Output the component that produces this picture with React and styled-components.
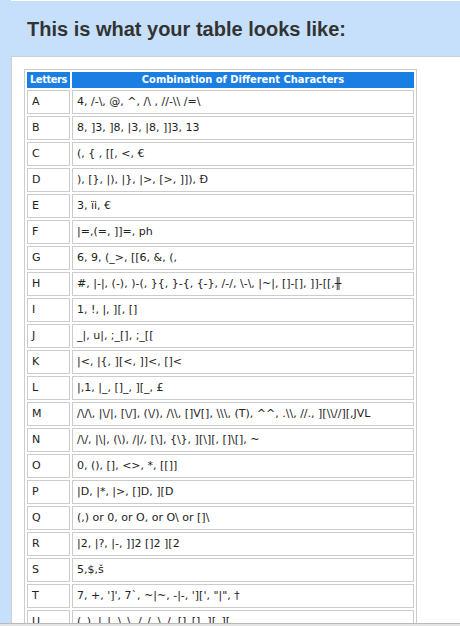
import React from "react";
import styled, { createGlobalStyle } from "styled-components";

const GlobalStyle = createGlobalStyle`
  html, body {
    margin: 0;
    padding: 0;
    background: #c6e0fb;
    overflow: hidden;
  }
`;

const Page = styled.div`
  width: 460px;
  height: 626px;
  background: #c6e0fb;
  overflow: hidden;
  position: relative;
`;

const TopStrip = styled.div`
  height: 1px;
  margin-left: 11px;
  background: #ffffff;
`;

const Heading = styled.h2`
  margin: 0;
  padding: 16px 0 0 27px;
  height: 55px;
  box-sizing: border-box;
  font-family: "Liberation Sans", Arial, sans-serif;
  font-size: 20px;
  line-height: 24px;
  font-weight: 700;
  color: #333333;
`;

const Panel = styled.div`
  margin-left: 11px;
  background: #ffffff;
  border-top: 1px solid #cfcfcf;
  border-left: 1px solid #cfcfcf;
  padding: 12px 0 0 12px;
  height: 600px;
`;

const Table = styled.table`
  border: 1px solid #cccccc;
  border-collapse: separate;
  border-spacing: 2px;
  width: 393px;
  table-layout: fixed;
  font-family: "DejaVu Sans", Verdana, sans-serif;
  font-size: 11px;
  color: #222222;
`;

const HeadCell = styled.th`
  background: #1b7ee2;
  color: #ffffff;
  font-family: "DejaVu Sans Condensed", "DejaVu Sans", sans-serif;
  font-weight: 700;
  text-align: center;
  height: 16px;
  padding: 0;
  line-height: 16px;
  white-space: nowrap;
  overflow: hidden;
  letter-spacing: ${props => (props.$narrow ? "-0.4px" : "0")};
  width: ${props => (props.$narrow ? "43px" : "auto")};
`;

const Cell = styled.td`
  border: 1px solid #cccccc;
  height: 22px;
  padding: 0 4px;
  line-height: 22px;
  white-space: nowrap;
  overflow: hidden;
`;

const BottomBar = styled.div`
  position: absolute;
  left: 0;
  right: 0;
  bottom: 0;
  height: 2px;
  border-top: 1px solid #b9b9b9;
  background: #e4e4e4;
`;

const rows = [
  ["A", "4, /-\\, @, ^, /\\ , //-\\\\ /=\\"],
  ["B", "8, ]3, ]8, |3, |8, ]]3, 13"],
  ["C", "(, { , [[, <, €"],
  ["D", "), [}, |), |}, |>, [>, ]]), Đ"],
  ["E", "3, ïi, €"],
  ["F", "|=,(=, ]]=, ph"],
  ["G", "6, 9, (_>, [[6, &, (,"],
  ["H", "#, |-|, (-), )-(, }{, }-{, {-}, /-/, \\-\\, |~|, []-[], ]]-[[,╫"],
  ["I", "1, !, |, ][, []"],
  ["J", "_|, u|, ;_[], ;_[["],
  ["K", "|<, |{, ][<, ]]<, []<"],
  ["L", "|,1, |_, []_, ][_, £"],
  ["M", "/\\/\\, |\\/|, [\\/], (\\/), /\\\\, []V[], \\\\\\, (T), ^^, .\\\\, //., ][\\\\//][,JVL"],
  ["N", "/\\/, |\\|, (\\), /|/, [\\], {\\}, ][\\][, []\\[], ~"],
  ["O", "0, (), [], <>, *, [[]]"],
  ["P", "|D, |*, |>, []D, ][D"],
  ["Q", "(,) or 0, or O, or O\\ or []\\"],
  ["R", "|2, |?, |-, ]]2 []2 ][2"],
  ["S", "5,$,š"],
  ["T", "7, +, ']', 7`, ~|~, -|-, '][', \"|\", †"],
  ["U", "(_), |_|, \\_\\, /_/, \\_/, []_[], ][_]["]
];

export default function App() {
  return (
    <>
      <GlobalStyle />
      <Page>
        <TopStrip />
        <Heading>This is what your table looks like:</Heading>
        <Panel>
          <Table>
            <thead>
              <tr>
                <HeadCell $narrow>Letters</HeadCell>
                <HeadCell>Combination of Different Characters</HeadCell>
              </tr>
            </thead>
            <tbody>
              {rows.map(([letter, combo]) => (
                <tr key={letter}>
                  <Cell>{letter}</Cell>
                  <Cell>{combo}</Cell>
                </tr>
              ))}
            </tbody>
          </Table>
        </Panel>
        <BottomBar />
      </Page>
    </>
  );
}
